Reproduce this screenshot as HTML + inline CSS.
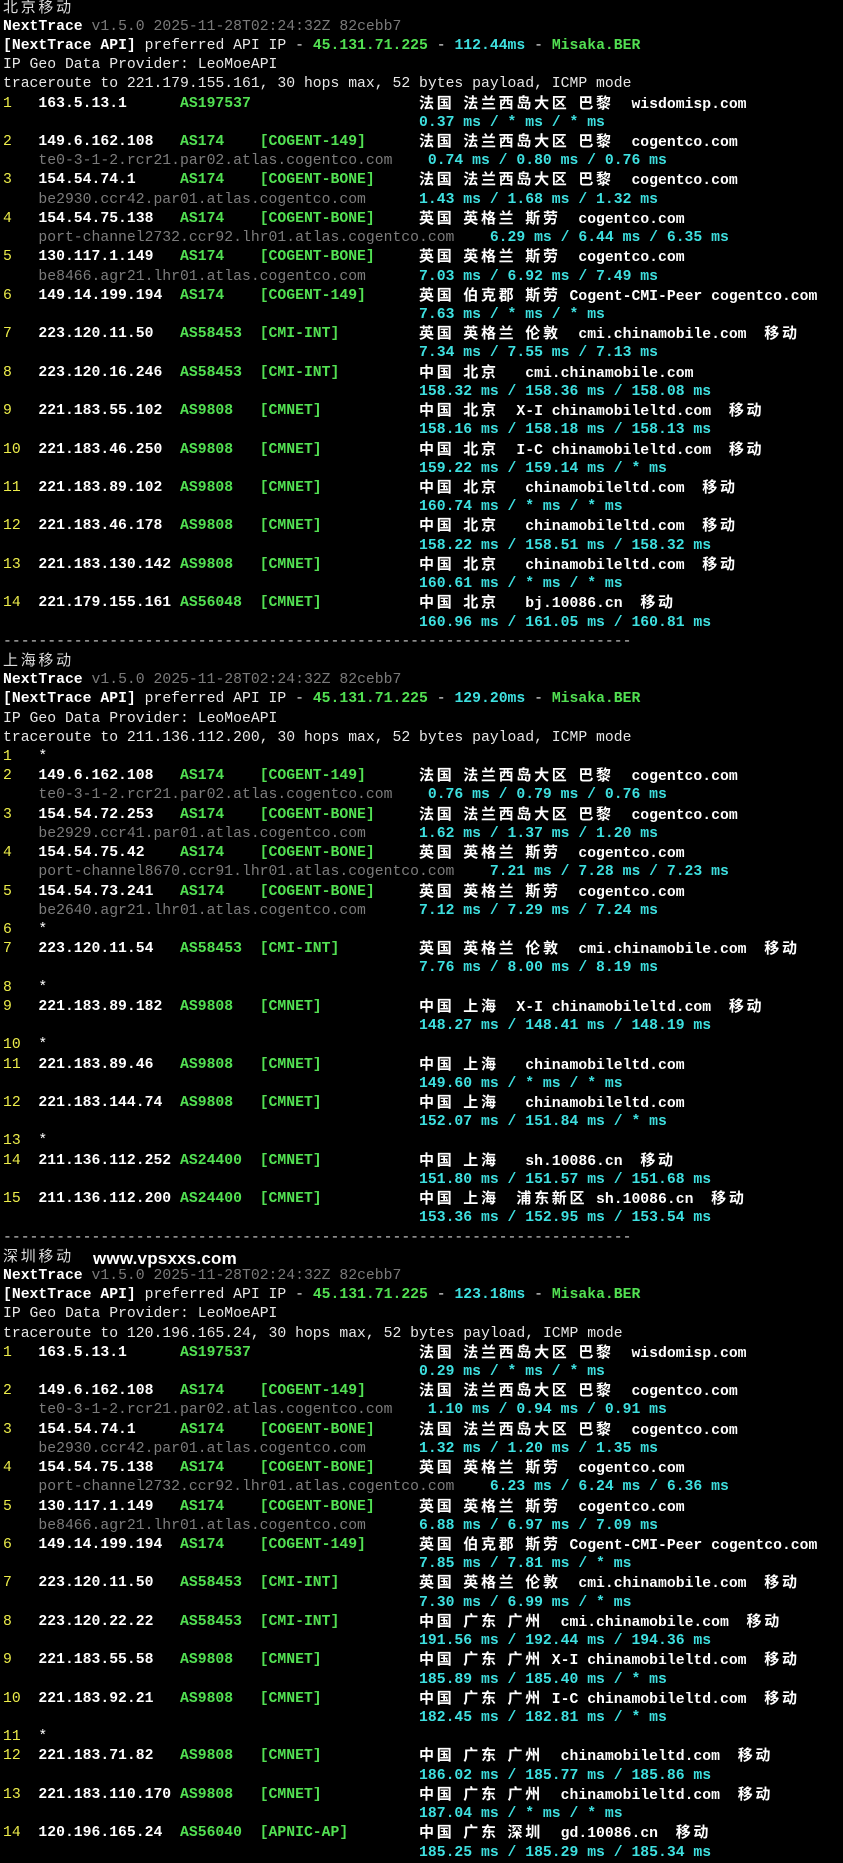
<!DOCTYPE html>
<html><head><meta charset="utf-8">
<style>
html,body{margin:0;padding:0;background:#000;}
body{width:843px;height:1844px;overflow:hidden;}
#t{position:absolute;left:3px;top:-1.5px;font-family:"Liberation Mono","DejaVu Sans Mono",monospace;font-size:14.75px;color:#e8e8e8;}
.l{position:relative;height:19.23px;line-height:19.23px;white-space:pre;}
.l b{position:absolute;top:0;font-weight:normal;white-space:pre;}
i{font-style:normal;font-family:"Liberation Mono","Noto Sans CJK SC",sans-serif;font-size:15px;letter-spacing:2.7px;}
.y{color:#ecec4a;left:0}
.w{color:#fff;font-weight:bold!important}
.g{color:#52e052;font-weight:bold!important}
.d{color:#7c7c7c}
.c{color:#3ee0e0;font-weight:bold!important}
.x{color:#fff;font-weight:bold!important}
.s{color:#fff}
.c4{left:4ch}.c20{left:20ch}.c29{left:29ch}.c47{left:47ch}.c48{left:48ch}.c55{left:55ch}
.hd{color:#fff;font-weight:bold}
.v{color:#7a7a7a}
.gr{color:#52e052;font-weight:bold}
.cy{color:#3ee0e0;font-weight:bold}
.ttl{color:#ddd}
.dash{color:#ccc}
#wm{position:absolute;left:93px;top:1249px;font-family:"Liberation Sans",sans-serif;font-size:17px;color:#fff;font-weight:bold;letter-spacing:0.2px}
</style></head><body>
<div id="t">
<div class="l ttl"><i>北京移动</i></div>
<div class="l"><span class="hd">NextTrace</span> <span class="v">v1.5.0 2025-11-28T02:24:32Z 82cebb7</span></div>
<div class="l"><span class="hd">[NextTrace API]</span> preferred API IP - <span class="gr">45.131.71.225</span> - <span class="cy">112.44ms</span> - <span class="gr">Misaka.BER</span></div>
<div class="l">IP Geo Data Provider: LeoMoeAPI</div>
<div class="l">traceroute to 221.179.155.161, 30 hops max, 52 bytes payload, ICMP mode</div>

<div class="l"><b class="y">1</b><b class="w c4">163.5.13.1</b><b class="g c20">AS197537</b><b class="x c47"><i>法国</i> <i>法兰西岛大区</i> <i>巴黎</i>  wisdomisp.com</b></div>
<div class="l"><b class="c c47">0.37 ms / * ms / * ms</b></div>
<div class="l"><b class="y">2</b><b class="w c4">149.6.162.108</b><b class="g c20">AS174</b><b class="g c29">[COGENT-149]</b><b class="x c47"><i>法国</i> <i>法兰西岛大区</i> <i>巴黎</i>  cogentco.com</b></div>
<div class="l"><b class="d c4">te0-3-1-2.rcr21.par02.atlas.cogentco.com</b><b class="c c48">0.74 ms / 0.80 ms / 0.76 ms</b></div>
<div class="l"><b class="y">3</b><b class="w c4">154.54.74.1</b><b class="g c20">AS174</b><b class="g c29">[COGENT-BONE]</b><b class="x c47"><i>法国</i> <i>法兰西岛大区</i> <i>巴黎</i>  cogentco.com</b></div>
<div class="l"><b class="d c4">be2930.ccr42.par01.atlas.cogentco.com</b><b class="c c47">1.43 ms / 1.68 ms / 1.32 ms</b></div>
<div class="l"><b class="y">4</b><b class="w c4">154.54.75.138</b><b class="g c20">AS174</b><b class="g c29">[COGENT-BONE]</b><b class="x c47"><i>英国</i> <i>英格兰</i> <i>斯劳</i>  cogentco.com</b></div>
<div class="l"><b class="d c4">port-channel2732.ccr92.lhr01.atlas.cogentco.com</b><b class="c c55">6.29 ms / 6.44 ms / 6.35 ms</b></div>
<div class="l"><b class="y">5</b><b class="w c4">130.117.1.149</b><b class="g c20">AS174</b><b class="g c29">[COGENT-BONE]</b><b class="x c47"><i>英国</i> <i>英格兰</i> <i>斯劳</i>  cogentco.com</b></div>
<div class="l"><b class="d c4">be8466.agr21.lhr01.atlas.cogentco.com</b><b class="c c47">7.03 ms / 6.92 ms / 7.49 ms</b></div>
<div class="l"><b class="y">6</b><b class="w c4">149.14.199.194</b><b class="g c20">AS174</b><b class="g c29">[COGENT-149]</b><b class="x c47"><i>英国</i> <i>伯克郡</i> <i>斯劳</i> Cogent-CMI-Peer cogentco.com</b></div>
<div class="l"><b class="c c47">7.63 ms / * ms / * ms</b></div>
<div class="l"><b class="y">7</b><b class="w c4">223.120.11.50</b><b class="g c20">AS58453</b><b class="g c29">[CMI-INT]</b><b class="x c47"><i>英国</i> <i>英格兰</i> <i>伦敦</i>  cmi.chinamobile.com  <i>移动</i></b></div>
<div class="l"><b class="c c47">7.34 ms / 7.55 ms / 7.13 ms</b></div>
<div class="l"><b class="y">8</b><b class="w c4">223.120.16.246</b><b class="g c20">AS58453</b><b class="g c29">[CMI-INT]</b><b class="x c47"><i>中国</i> <i>北京</i>   cmi.chinamobile.com</b></div>
<div class="l"><b class="c c47">158.32 ms / 158.36 ms / 158.08 ms</b></div>
<div class="l"><b class="y">9</b><b class="w c4">221.183.55.102</b><b class="g c20">AS9808</b><b class="g c29">[CMNET]</b><b class="x c47"><i>中国</i> <i>北京</i>  X-I chinamobileltd.com  <i>移动</i></b></div>
<div class="l"><b class="c c47">158.16 ms / 158.18 ms / 158.13 ms</b></div>
<div class="l"><b class="y">10</b><b class="w c4">221.183.46.250</b><b class="g c20">AS9808</b><b class="g c29">[CMNET]</b><b class="x c47"><i>中国</i> <i>北京</i>  I-C chinamobileltd.com  <i>移动</i></b></div>
<div class="l"><b class="c c47">159.22 ms / 159.14 ms / * ms</b></div>
<div class="l"><b class="y">11</b><b class="w c4">221.183.89.102</b><b class="g c20">AS9808</b><b class="g c29">[CMNET]</b><b class="x c47"><i>中国</i> <i>北京</i>   chinamobileltd.com  <i>移动</i></b></div>
<div class="l"><b class="c c47">160.74 ms / * ms / * ms</b></div>
<div class="l"><b class="y">12</b><b class="w c4">221.183.46.178</b><b class="g c20">AS9808</b><b class="g c29">[CMNET]</b><b class="x c47"><i>中国</i> <i>北京</i>   chinamobileltd.com  <i>移动</i></b></div>
<div class="l"><b class="c c47">158.22 ms / 158.51 ms / 158.32 ms</b></div>
<div class="l"><b class="y">13</b><b class="w c4">221.183.130.142</b><b class="g c20">AS9808</b><b class="g c29">[CMNET]</b><b class="x c47"><i>中国</i> <i>北京</i>   chinamobileltd.com  <i>移动</i></b></div>
<div class="l"><b class="c c47">160.61 ms / * ms / * ms</b></div>
<div class="l"><b class="y">14</b><b class="w c4">221.179.155.161</b><b class="g c20">AS56048</b><b class="g c29">[CMNET]</b><b class="x c47"><i>中国</i> <i>北京</i>   bj.10086.cn  <i>移动</i></b></div>
<div class="l"><b class="c c47">160.96 ms / 161.05 ms / 160.81 ms</b></div>
<div class="l dash">-----------------------------------------------------------------------</div>

<div class="l ttl"><i>上海移动</i></div>
<div class="l"><span class="hd">NextTrace</span> <span class="v">v1.5.0 2025-11-28T02:24:32Z 82cebb7</span></div>
<div class="l"><span class="hd">[NextTrace API]</span> preferred API IP - <span class="gr">45.131.71.225</span> - <span class="cy">129.20ms</span> - <span class="gr">Misaka.BER</span></div>
<div class="l">IP Geo Data Provider: LeoMoeAPI</div>
<div class="l">traceroute to 211.136.112.200, 30 hops max, 52 bytes payload, ICMP mode</div>
<div class="l"><b class="y">1</b><b class="s c4">*</b></div>
<div class="l"><b class="y">2</b><b class="w c4">149.6.162.108</b><b class="g c20">AS174</b><b class="g c29">[COGENT-149]</b><b class="x c47"><i>法国</i> <i>法兰西岛大区</i> <i>巴黎</i>  cogentco.com</b></div>
<div class="l"><b class="d c4">te0-3-1-2.rcr21.par02.atlas.cogentco.com</b><b class="c c48">0.76 ms / 0.79 ms / 0.76 ms</b></div>
<div class="l"><b class="y">3</b><b class="w c4">154.54.72.253</b><b class="g c20">AS174</b><b class="g c29">[COGENT-BONE]</b><b class="x c47"><i>法国</i> <i>法兰西岛大区</i> <i>巴黎</i>  cogentco.com</b></div>
<div class="l"><b class="d c4">be2929.ccr41.par01.atlas.cogentco.com</b><b class="c c47">1.62 ms / 1.37 ms / 1.20 ms</b></div>
<div class="l"><b class="y">4</b><b class="w c4">154.54.75.42</b><b class="g c20">AS174</b><b class="g c29">[COGENT-BONE]</b><b class="x c47"><i>英国</i> <i>英格兰</i> <i>斯劳</i>  cogentco.com</b></div>
<div class="l"><b class="d c4">port-channel8670.ccr91.lhr01.atlas.cogentco.com</b><b class="c c55">7.21 ms / 7.28 ms / 7.23 ms</b></div>
<div class="l"><b class="y">5</b><b class="w c4">154.54.73.241</b><b class="g c20">AS174</b><b class="g c29">[COGENT-BONE]</b><b class="x c47"><i>英国</i> <i>英格兰</i> <i>斯劳</i>  cogentco.com</b></div>
<div class="l"><b class="d c4">be2640.agr21.lhr01.atlas.cogentco.com</b><b class="c c47">7.12 ms / 7.29 ms / 7.24 ms</b></div>
<div class="l"><b class="y">6</b><b class="s c4">*</b></div>
<div class="l"><b class="y">7</b><b class="w c4">223.120.11.54</b><b class="g c20">AS58453</b><b class="g c29">[CMI-INT]</b><b class="x c47"><i>英国</i> <i>英格兰</i> <i>伦敦</i>  cmi.chinamobile.com  <i>移动</i></b></div>
<div class="l"><b class="c c47">7.76 ms / 8.00 ms / 8.19 ms</b></div>
<div class="l"><b class="y">8</b><b class="s c4">*</b></div>
<div class="l"><b class="y">9</b><b class="w c4">221.183.89.182</b><b class="g c20">AS9808</b><b class="g c29">[CMNET]</b><b class="x c47"><i>中国</i> <i>上海</i>  X-I chinamobileltd.com  <i>移动</i></b></div>
<div class="l"><b class="c c47">148.27 ms / 148.41 ms / 148.19 ms</b></div>
<div class="l"><b class="y">10</b><b class="s c4">*</b></div>
<div class="l"><b class="y">11</b><b class="w c4">221.183.89.46</b><b class="g c20">AS9808</b><b class="g c29">[CMNET]</b><b class="x c47"><i>中国</i> <i>上海</i>   chinamobileltd.com</b></div>
<div class="l"><b class="c c47">149.60 ms / * ms / * ms</b></div>
<div class="l"><b class="y">12</b><b class="w c4">221.183.144.74</b><b class="g c20">AS9808</b><b class="g c29">[CMNET]</b><b class="x c47"><i>中国</i> <i>上海</i>   chinamobileltd.com</b></div>
<div class="l"><b class="c c47">152.07 ms / 151.84 ms / * ms</b></div>
<div class="l"><b class="y">13</b><b class="s c4">*</b></div>
<div class="l"><b class="y">14</b><b class="w c4">211.136.112.252</b><b class="g c20">AS24400</b><b class="g c29">[CMNET]</b><b class="x c47"><i>中国</i> <i>上海</i>   sh.10086.cn  <i>移动</i></b></div>
<div class="l"><b class="c c47">151.80 ms / 151.57 ms / 151.68 ms</b></div>
<div class="l"><b class="y">15</b><b class="w c4">211.136.112.200</b><b class="g c20">AS24400</b><b class="g c29">[CMNET]</b><b class="x c47"><i>中国</i> <i>上海</i>  <i>浦东新区</i> sh.10086.cn  <i>移动</i></b></div>
<div class="l"><b class="c c47">153.36 ms / 152.95 ms / 153.54 ms</b></div>
<div class="l dash">-----------------------------------------------------------------------</div>

<div class="l ttl"><i>深圳移动</i></div>
<div class="l"><span class="hd">NextTrace</span> <span class="v">v1.5.0 2025-11-28T02:24:32Z 82cebb7</span></div>
<div class="l"><span class="hd">[NextTrace API]</span> preferred API IP - <span class="gr">45.131.71.225</span> - <span class="cy">123.18ms</span> - <span class="gr">Misaka.BER</span></div>
<div class="l">IP Geo Data Provider: LeoMoeAPI</div>
<div class="l">traceroute to 120.196.165.24, 30 hops max, 52 bytes payload, ICMP mode</div>
<div class="l"><b class="y">1</b><b class="w c4">163.5.13.1</b><b class="g c20">AS197537</b><b class="x c47"><i>法国</i> <i>法兰西岛大区</i> <i>巴黎</i>  wisdomisp.com</b></div>
<div class="l"><b class="c c47">0.29 ms / * ms / * ms</b></div>
<div class="l"><b class="y">2</b><b class="w c4">149.6.162.108</b><b class="g c20">AS174</b><b class="g c29">[COGENT-149]</b><b class="x c47"><i>法国</i> <i>法兰西岛大区</i> <i>巴黎</i>  cogentco.com</b></div>
<div class="l"><b class="d c4">te0-3-1-2.rcr21.par02.atlas.cogentco.com</b><b class="c c48">1.10 ms / 0.94 ms / 0.91 ms</b></div>
<div class="l"><b class="y">3</b><b class="w c4">154.54.74.1</b><b class="g c20">AS174</b><b class="g c29">[COGENT-BONE]</b><b class="x c47"><i>法国</i> <i>法兰西岛大区</i> <i>巴黎</i>  cogentco.com</b></div>
<div class="l"><b class="d c4">be2930.ccr42.par01.atlas.cogentco.com</b><b class="c c47">1.32 ms / 1.20 ms / 1.35 ms</b></div>
<div class="l"><b class="y">4</b><b class="w c4">154.54.75.138</b><b class="g c20">AS174</b><b class="g c29">[COGENT-BONE]</b><b class="x c47"><i>英国</i> <i>英格兰</i> <i>斯劳</i>  cogentco.com</b></div>
<div class="l"><b class="d c4">port-channel2732.ccr92.lhr01.atlas.cogentco.com</b><b class="c c55">6.23 ms / 6.24 ms / 6.36 ms</b></div>
<div class="l"><b class="y">5</b><b class="w c4">130.117.1.149</b><b class="g c20">AS174</b><b class="g c29">[COGENT-BONE]</b><b class="x c47"><i>英国</i> <i>英格兰</i> <i>斯劳</i>  cogentco.com</b></div>
<div class="l"><b class="d c4">be8466.agr21.lhr01.atlas.cogentco.com</b><b class="c c47">6.88 ms / 6.97 ms / 7.09 ms</b></div>
<div class="l"><b class="y">6</b><b class="w c4">149.14.199.194</b><b class="g c20">AS174</b><b class="g c29">[COGENT-149]</b><b class="x c47"><i>英国</i> <i>伯克郡</i> <i>斯劳</i> Cogent-CMI-Peer cogentco.com</b></div>
<div class="l"><b class="c c47">7.85 ms / 7.81 ms / * ms</b></div>
<div class="l"><b class="y">7</b><b class="w c4">223.120.11.50</b><b class="g c20">AS58453</b><b class="g c29">[CMI-INT]</b><b class="x c47"><i>英国</i> <i>英格兰</i> <i>伦敦</i>  cmi.chinamobile.com  <i>移动</i></b></div>
<div class="l"><b class="c c47">7.30 ms / 6.99 ms / * ms</b></div>
<div class="l"><b class="y">8</b><b class="w c4">223.120.22.22</b><b class="g c20">AS58453</b><b class="g c29">[CMI-INT]</b><b class="x c47"><i>中国</i> <i>广东</i> <i>广州</i>  cmi.chinamobile.com  <i>移动</i></b></div>
<div class="l"><b class="c c47">191.56 ms / 192.44 ms / 194.36 ms</b></div>
<div class="l"><b class="y">9</b><b class="w c4">221.183.55.58</b><b class="g c20">AS9808</b><b class="g c29">[CMNET]</b><b class="x c47"><i>中国</i> <i>广东</i> <i>广州</i> X-I chinamobileltd.com  <i>移动</i></b></div>
<div class="l"><b class="c c47">185.89 ms / 185.40 ms / * ms</b></div>
<div class="l"><b class="y">10</b><b class="w c4">221.183.92.21</b><b class="g c20">AS9808</b><b class="g c29">[CMNET]</b><b class="x c47"><i>中国</i> <i>广东</i> <i>广州</i> I-C chinamobileltd.com  <i>移动</i></b></div>
<div class="l"><b class="c c47">182.45 ms / 182.81 ms / * ms</b></div>
<div class="l"><b class="y">11</b><b class="s c4">*</b></div>
<div class="l"><b class="y">12</b><b class="w c4">221.183.71.82</b><b class="g c20">AS9808</b><b class="g c29">[CMNET]</b><b class="x c47"><i>中国</i> <i>广东</i> <i>广州</i>  chinamobileltd.com  <i>移动</i></b></div>
<div class="l"><b class="c c47">186.02 ms / 185.77 ms / 185.86 ms</b></div>
<div class="l"><b class="y">13</b><b class="w c4">221.183.110.170</b><b class="g c20">AS9808</b><b class="g c29">[CMNET]</b><b class="x c47"><i>中国</i> <i>广东</i> <i>广州</i>  chinamobileltd.com  <i>移动</i></b></div>
<div class="l"><b class="c c47">187.04 ms / * ms / * ms</b></div>
<div class="l"><b class="y">14</b><b class="w c4">120.196.165.24</b><b class="g c20">AS56040</b><b class="g c29">[APNIC-AP]</b><b class="x c47"><i>中国</i> <i>广东</i> <i>深圳</i>  gd.10086.cn  <i>移动</i></b></div>
<div class="l"><b class="c c47">185.25 ms / 185.29 ms / 185.34 ms</b></div>
</div>
<div id="wm">www.vpsxxs.com</div>
</body></html>
